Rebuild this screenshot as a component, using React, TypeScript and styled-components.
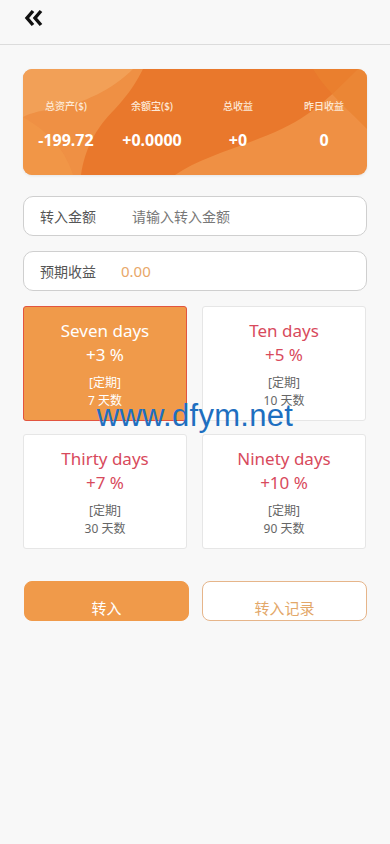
import React from "react";
import styled, { createGlobalStyle } from "styled-components";

const GlobalStyle = createGlobalStyle`
  html, body {
    margin: 0;
    padding: 0;
    background: #f8f8f8;
    font-family: "Noto Sans", "Noto Sans CJK SC", sans-serif;
  }
  * { box-sizing: border-box; }
`;

const Page = styled.div`
  position: relative;
  width: 390px;
  min-height: 844px;
  background: #f8f8f8;
`;

const Header = styled.div`
  height: 45px;
  display: flex;
  align-items: center;
  padding-left: 24px;
  border-bottom: 1px solid #dcdcdc;
  padding-bottom: 8px;
`;

const Content = styled.div`
  padding: 24px 23px 0;
  display: flex;
  flex-direction: column;
`;

const AssetCard = styled.div`
  position: relative;
  height: 106px;
  border-radius: 9px;
  overflow: hidden;
  background: #ef9044;
  box-shadow: 0 1px 3px rgba(0, 0, 0, 0.08);
`;

const Waves = styled.svg`
  position: absolute;
  inset: 0;
  width: 100%;
  height: 100%;
`;

const StatRow = styled.div`
  position: relative;
  display: grid;
  grid-template-columns: repeat(4, 1fr);
  height: 100%;
  align-content: center;
  padding-top: 4px;
`;

const Stat = styled.div`
  display: flex;
  flex-direction: column;
  align-items: center;
  color: #fff;
`;

const StatLabel = styled.span`
  font-size: 10px;
  line-height: 14px;
  font-weight: 500;
  color: #fde9d6;
`;

const StatValue = styled.span`
  margin-top: 17px;
  font-size: 16px;
  font-weight: 700;
  line-height: 20px;
`;

const Field = styled.div<{ $gap: number }>`
  display: flex;
  align-items: center;
  height: 40px;
  margin-top: ${(p) => p.$gap}px;
  padding-left: 16px;
  background: #fff;
  border: 1px solid #cfcfcf;
  border-radius: 10px;
  font-size: 14px;
`;

const FieldLabel = styled.span<{ $width: number }>`
  width: ${(p) => p.$width}px;
  color: #555;
`;

const Placeholder = styled.span`
  color: #777;
`;

const Earn = styled.span`
  color: #e8a769;
  font-size: 15px;
`;

const PlanGrid = styled.div`
  margin-top: 15px;
  display: grid;
  grid-template-columns: 164px 164px;
  column-gap: 15px;
  row-gap: 13px;
`;

const Plan = styled.div<{ $active?: boolean }>`
  height: 115px;
  border-radius: 3px;
  background: ${(p) => (p.$active ? "#f09a4a" : "#fff")};
  border: 1px solid ${(p) => (p.$active ? "#e2553f" : "#e6e6e6")};
  display: flex;
  flex-direction: column;
  align-items: center;
  padding-top: 12px;
  color: ${(p) => (p.$active ? "#fff" : "#666")};
`;

const PlanTitle = styled.span<{ $active?: boolean }>`
  font-size: 17px;
  line-height: 24px;
  color: ${(p) => (p.$active ? "#fff" : "#d84a5c")};
`;

const PlanNote = styled.span`
  font-size: 12px;
  line-height: 18px;
`;

const PlanNoteTop = styled(PlanNote)`
  margin-top: 7px;
`;

const Actions = styled.div`
  margin-top: 32px;
  display: grid;
  grid-template-columns: 165px 165px;
  column-gap: 13px;
  padding-left: 1px;
`;

const ActionButton = styled.button<{ $primary?: boolean }>`
  height: 40px;
  border-radius: 8px;
  font-family: inherit;
  font-size: 15px;
  padding: 13px 0 0;
  cursor: pointer;
  background: ${(p) => (p.$primary ? "#f09a4a" : "#fff")};
  color: ${(p) => (p.$primary ? "#fff" : "#e3a769")};
  border: 1px solid ${(p) => (p.$primary ? "#f09a4a" : "#e6b58a")};
`;

const Watermark = styled.div`
  position: absolute;
  left: 0;
  right: 0;
  top: 398px;
  text-align: center;
  font-family: "Liberation Sans", Arial, sans-serif;
  font-size: 31px;
  color: #1e6fc0;
  letter-spacing: 0.3px;
  pointer-events: none;
`;

const BackIcon = () => (
  <svg width="20" height="20" viewBox="0 0 20 20">
    <path d="M9 3 L3 10 L9 17" fill="none" stroke="#111" strokeWidth="3.4" />
    <path d="M17 3 L11 10 L17 17" fill="none" stroke="#111" strokeWidth="3.4" />
  </svg>
);

const stats = [
  { label: "总资产($)", value: "-199.72" },
  { label: "余额宝($)", value: "+0.0000" },
  { label: "总收益", value: "+0" },
  { label: "昨日收益", value: "0" },
];

const plans = [
  { title: "Seven days", rate: "+3 %", days: "7 天数", active: true },
  { title: "Ten days", rate: "+5 %", days: "10 天数" },
  { title: "Thirty days", rate: "+7 %", days: "30 天数" },
  { title: "Ninety days", rate: "+10 %", days: "90 天数" },
];

export default function App() {
  return (
    <Page>
      <GlobalStyle />
      <Header>
        <BackIcon />
      </Header>
      <Content>
        <AssetCard>
          <Waves viewBox="0 0 344 106" preserveAspectRatio="none">
            <path d="M0 0 H110 C90 20 60 35 30 40 C15 42 5 45 0 48 Z" fill="#f3a45c" opacity="0.8" />
            <path
              d="M120 0 H335 C305 30 285 50 245 66 C205 82 175 90 152 106 H58 C62 80 72 60 92 40 C106 25 114 12 120 0 Z"
              fill="#e9782c"
            />
            <path d="M290 0 H344 V60 C330 45 305 25 290 0 Z" fill="#ea812f" opacity="0.7" />
            <path d="M0 48 C20 60 40 75 50 106 H0 Z" fill="#f19748" opacity="0.8" />
          </Waves>
          <StatRow>
            {stats.map((s) => (
              <Stat key={s.label}>
                <StatLabel>{s.label}</StatLabel>
                <StatValue>{s.value}</StatValue>
              </Stat>
            ))}
          </StatRow>
        </AssetCard>
        <Field $gap={21}>
          <FieldLabel $width={92}>转入金额</FieldLabel>
          <Placeholder>请输入转入金额</Placeholder>
        </Field>
        <Field $gap={15}>
          <FieldLabel $width={81}>预期收益</FieldLabel>
          <Earn>0.00</Earn>
        </Field>
        <PlanGrid>
          {plans.map((p) => (
            <Plan key={p.title} $active={p.active}>
              <PlanTitle $active={p.active}>{p.title}</PlanTitle>
              <PlanTitle $active={p.active}>{p.rate}</PlanTitle>
              <PlanNoteTop>[定期]</PlanNoteTop>
              <PlanNote>{p.days}</PlanNote>
            </Plan>
          ))}
        </PlanGrid>
        <Actions>
          <ActionButton $primary>转入</ActionButton>
          <ActionButton>转入记录</ActionButton>
        </Actions>
      </Content>
      <Watermark>www.dfym.net</Watermark>
    </Page>
  );
}
